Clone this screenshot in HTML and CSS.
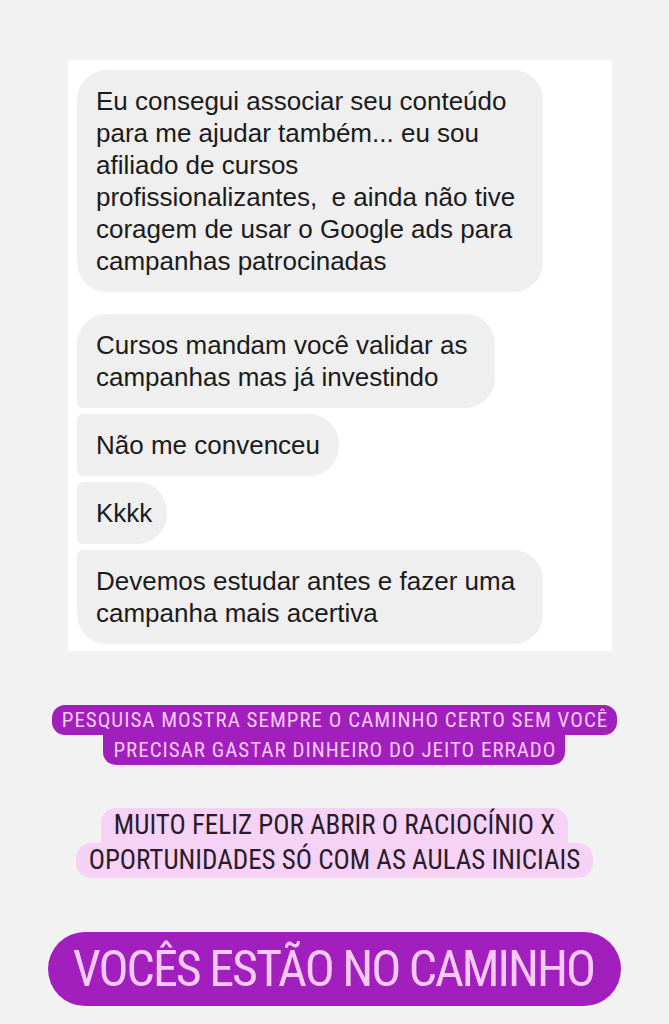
FILE: index.html
```html
<!DOCTYPE html>
<html lang="pt-BR">
<head>
<meta charset="utf-8">
<title>Conversa</title>
<link rel="stylesheet" href="styles.css">
</head>
<body>
<main class="page">
  <section class="chat">
    <div class="bubble wrap b-first">Eu consegui associar seu conteúdo<br>para me ajudar também... eu sou<br>afiliado de cursos<br>profissionalizantes,&nbsp; e ainda não tive<br>coragem de usar o Google ads para<br>campanhas patrocinadas</div>
    <div class="bubble wrap b-top gap-lg">Cursos mandam você validar as<br>campanhas mas já investindo</div>
    <div class="bubble b-mid">Não me convenceu</div>
    <div class="bubble short b-mid">Kkkk</div>
    <div class="bubble wrap b-end">Devemos estudar antes e fazer uma<br>campanha mais acertiva</div>
  </section>

  <div class="caption cap-small purple">
    <span class="line wide">PESQUISA MOSTRA SEMPRE O CAMINHO CERTO SEM VOCÊ</span>
    <span class="line narrow-below">PRECISAR GASTAR DINHEIRO DO JEITO ERRADO</span>
  </div>

  <div class="caption cap-mid pink">
    <span class="line narrow-above">MUITO FELIZ POR ABRIR O RACIOCÍNIO X</span>
    <span class="line wide">OPORTUNIDADES SÓ COM AS AULAS INICIAIS</span>
  </div>

  <div class="caption cap-big purple">
    <span class="line solo">VOCÊS ESTÃO NO CAMINHO</span>
  </div>
</main>
</body>
</html>
```

FILE: styles.css
```css
* { box-sizing: border-box; }

html, body {
  margin: 0;
  padding: 0;
  background: #f2f2f2;
}

.page {
  width: 669px;
  height: 1024px;
  display: flex;
  flex-direction: column;
  align-items: center;
  overflow: hidden;
}

.chat {
  align-self: flex-start;
  margin: 60px 0 0 68px;
  width: 544px;
  background: #ffffff;
  padding: 10px 9px 7px 9px;
  display: flex;
  flex-direction: column;
  align-items: flex-start;
  gap: 6px;
  font-family: "Liberation Sans", Arial, sans-serif;
  font-size: 26px;
  line-height: 32px;
  color: #1b1b1b;
}

.bubble {
  background: #efefef;
  padding: 15px 19px 15px 19px;
  border-radius: 30px;
  white-space: nowrap;
}

.bubble.wrap { padding-right: 28px; }
.bubble.short { padding-right: 15px; }

.gap-lg { margin-top: 16px; }

.b-top { border-bottom-left-radius: 6px; }
.b-mid { border-top-left-radius: 6px; border-bottom-left-radius: 6px; }
.b-end { border-top-left-radius: 6px; }

.caption {
  display: flex;
  flex-direction: column;
  align-items: center;
  font-family: "Roboto Condensed", Roboto, "DejaVu Sans Condensed", sans-serif;
  font-stretch: 75%;
  white-space: nowrap;
}

.line {
  display: block;
}

.purple .line { background: #a01fbd; color: #f9c9f7; }
.pink .line { background: #f6d2f6; color: #2a1d2a; }

.cap-small { margin-top: 54px; font-size: 21px; letter-spacing: 1px; }
.cap-small .line { line-height: 30px; padding: 0 9px 0 10px; border-radius: 13px; }
.cap-small .narrow-below { border-top-left-radius: 0; border-top-right-radius: 0; }

.cap-mid { margin-top: 43px; font-size: 27px; }
.cap-mid .line { line-height: 35px; padding: 0 13px; border-radius: 15px; }
.cap-mid .narrow-above { border-bottom-left-radius: 0; border-bottom-right-radius: 0; }

.cap-big { margin-top: 54px; font-size: 50px; letter-spacing: -2px; }
.cap-big .line { line-height: 74px; padding: 0 27px 0 25px; border-radius: 37px; }
```
